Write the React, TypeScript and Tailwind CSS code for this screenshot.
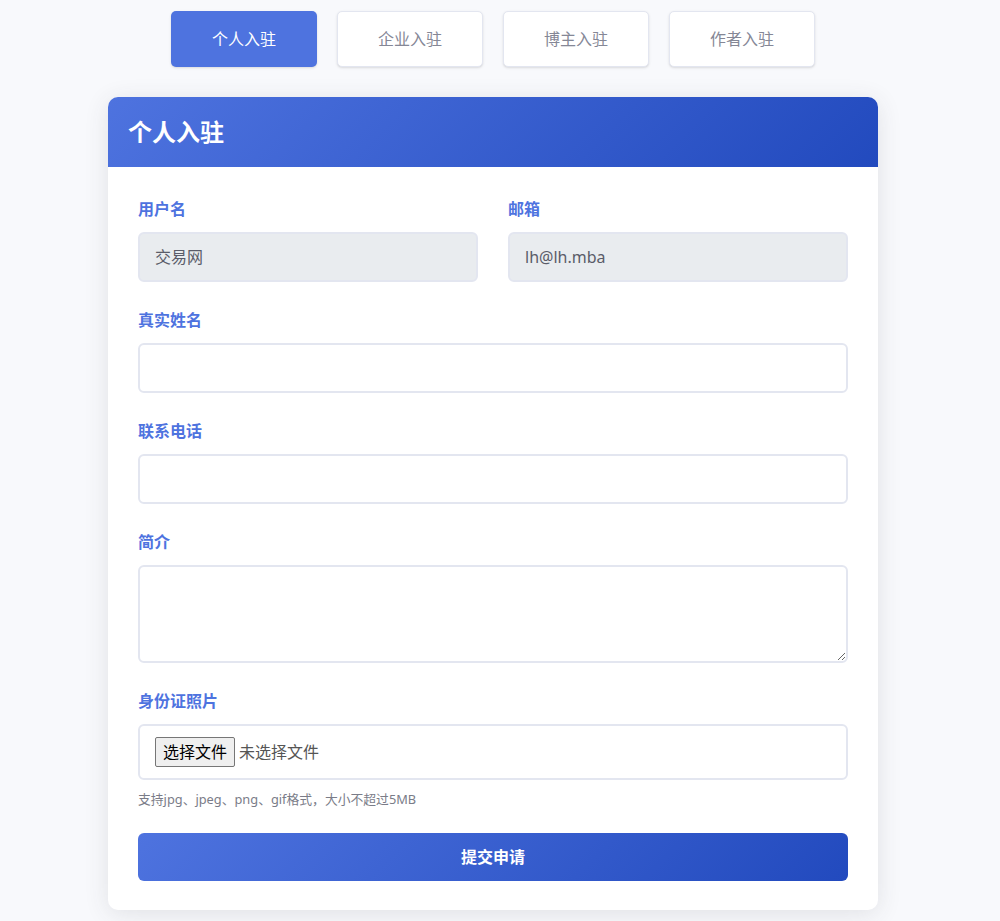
import React from "react";

const tabs = ["个人入驻", "企业入驻", "博主入驻", "作者入驻"];

function Label({ children }: { children: React.ReactNode }) {
  return <div className="text-[16px] leading-6 font-bold text-[#4e73df] mb-[11px]">{children}</div>;
}

export default function App() {
  return (
    <div
      className="min-h-[921px] bg-[#f8f9fc] pr-[14px]"
      style={{ fontFamily: '"Noto Sans", "Noto Sans CJK SC", sans-serif' }}
    >
      <div className="w-[770px] mx-auto">
        <div className="flex justify-center gap-5 pt-[11px]">
          {tabs.map((t, i) => (
            <div
              key={t}
              className={
                i === 0
                  ? "w-[146px] h-[56px] flex items-center justify-center rounded-[5px] bg-[#4e73df] text-white text-[16px] shadow-sm"
                  : "w-[146px] h-[56px] flex items-center justify-center rounded-[5px] bg-white border border-[#e3e6f0] text-[#858796] text-[16px] shadow-sm"
              }
            >
              {t}
            </div>
          ))}
        </div>
        <div className="mt-[30px] bg-white rounded-[10px] overflow-hidden shadow-[0_4px_24px_rgba(58,59,69,0.12)]">
          <div className="h-[70px] flex items-center px-5 bg-[linear-gradient(135deg,#4e73df_0%,#224abe_100%)]">
            <div className="text-white text-[24px] font-bold">个人入驻</div>
          </div>
          <div className="px-[30px] pt-[30px] pb-[29px]">
            <div className="grid grid-cols-2 gap-[30px] mb-[26px]">
              <div>
                <Label>用户名</Label>
                <div className="h-[50px] rounded-[6px] border-2 border-[#e3e6f0] bg-[#e9ecef] px-[15px] flex items-center text-[16px] text-[#5a5c69]">
                  交易网
                </div>
              </div>
              <div>
                <Label>邮箱</Label>
                <div className="h-[50px] rounded-[6px] border-2 border-[#e3e6f0] bg-[#e9ecef] px-[15px] flex items-center text-[16px] text-[#5a5c69]">
                  lh@lh.mba
                </div>
              </div>
            </div>
            <div className="mb-[26px]">
              <Label>真实姓名</Label>
              <input className="block w-full h-[50px] rounded-[6px] border-2 border-[#e3e6f0] bg-white px-[15px] outline-none" />
            </div>
            <div className="mb-[26px]">
              <Label>联系电话</Label>
              <input className="block w-full h-[50px] rounded-[6px] border-2 border-[#e3e6f0] bg-white px-[15px] outline-none" />
            </div>
            <div className="mb-[26px]">
              <Label>简介</Label>
              <textarea className="block w-full h-[98px] rounded-[6px] border-2 border-[#e3e6f0] bg-white px-[15px] outline-none" />
            </div>
            <div>
              <Label>身份证照片</Label>
              <div className="h-[56px] rounded-[6px] border-2 border-[#e3e6f0] bg-white px-[15px] flex items-center">
                <div className="h-[30px] w-[80px] flex items-center justify-center bg-[#efefef] border border-[#767676] rounded-[2px] text-[16px] text-black">
                  选择文件
                </div>
                <span className="ml-[4px] text-[16px] text-[#555]">未选择文件</span>
              </div>
              <div className="mt-[10px] text-[12.8px] leading-[18px] text-[#7a7c88]">
                支持jpg、jpeg、png、gif格式，大小不超过5MB
              </div>
            </div>
            <div className="mt-[25px] h-[48px] rounded-[6px] bg-[linear-gradient(135deg,#4e73df_0%,#224abe_100%)] flex items-center justify-center text-white text-[16px] font-bold">
              提交申请
            </div>
          </div>
        </div>
      </div>
    </div>
  );
}
